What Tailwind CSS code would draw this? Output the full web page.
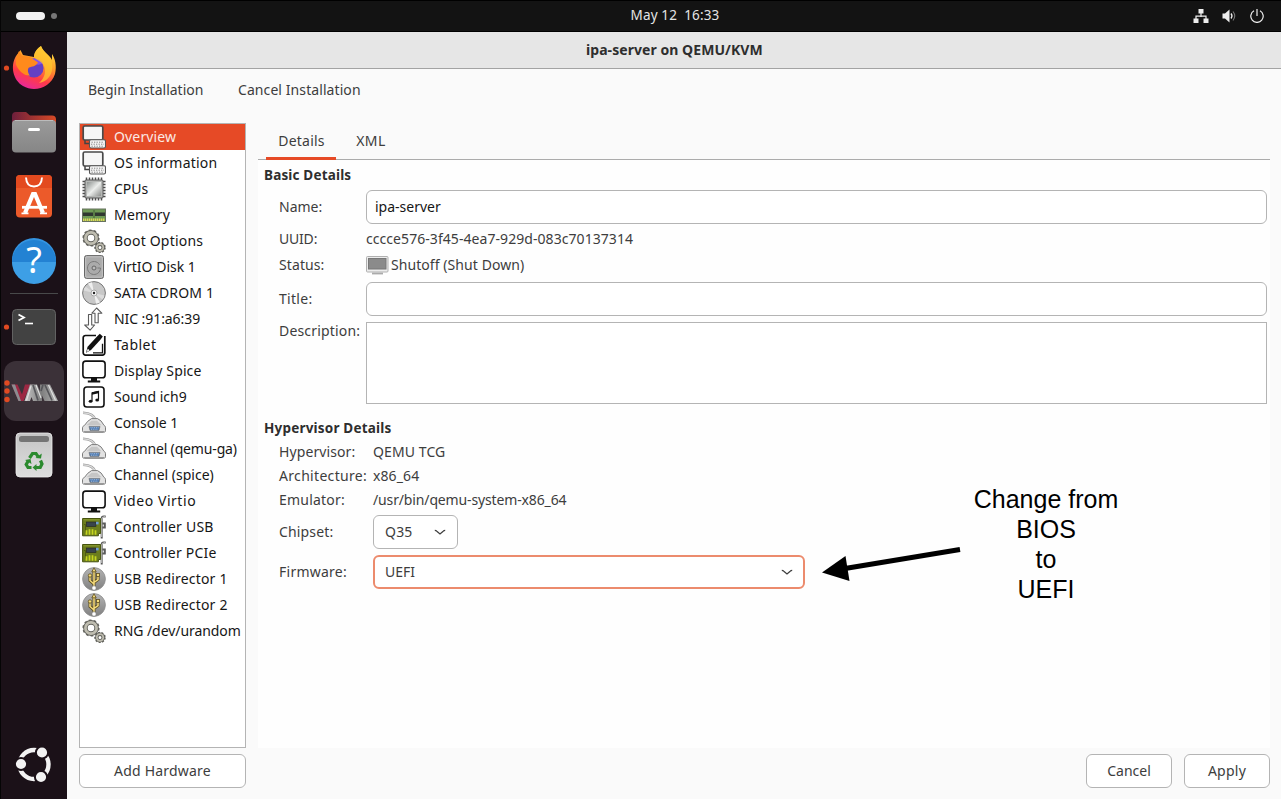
<!DOCTYPE html>
<html lang="en">
<head>
<meta charset="utf-8">
<title>ipa-server on QEMU/KVM</title>
<script src="https://cdn.jsdelivr.net/npm/@tailwindcss/browser@4"></script>
</head>
<body class="w-[1281px] h-[799px] overflow-hidden bg-[#fafafa] font-['Noto_Sans',sans-serif] text-[14px] text-[#3d3d3d]">

<svg class="absolute size-0">
  <defs>
    <linearGradient id="gMetal" x1="0" y1="0" x2="1" y2="1"><stop offset="0" stop-color="#8d9290"/><stop offset=".5" stop-color="#eceeec"/><stop offset="1" stop-color="#8d8f8d"/></linearGradient>
    <linearGradient id="gGray" x1="0" y1="0" x2="0" y2="1"><stop offset="0" stop-color="#b4b4b4"/><stop offset="1" stop-color="#808080"/></linearGradient>
    <symbol id="pc" viewBox="0 0 24 24">
      <path d="M3 15v3.500h4.500" fill="none" stroke="#444" stroke-width="1.500"/>
      <rect x="1.200" y="1" width="19.600" height="14" rx="1.500" fill="#f6f6f6" stroke="#4a4a4a" stroke-width="1.700"/>
      <rect x="7.500" y="14.800" width="16" height="8.200" rx="1.500" fill="#f6f6f6" stroke="#555" stroke-width="1.100"/>
      <path d="M9.500 17.200h12M9 19.200h13M9.500 21.200h12" stroke="#777" stroke-width=".9" stroke-dasharray="1.300 1.200"/>
    </symbol>
    <symbol id="cpu" viewBox="0 0 24 24">
      <path d="M4.500 .5v23M7.500 .5v23M10.500 .5v23M13.500 .5v23M16.500 .5v23M19.500 .5v23M.5 4.500h23M.5 7.500h23M.5 10.500h23M.5 13.500h23M.5 16.500h23M.5 19.500h23" stroke="#4c4c4c" stroke-width="1.500"/>
      <rect x="3" y="3" width="18" height="18" rx="1" fill="#b5b7b5" stroke="#5a5a5a"/>
      <rect x="5" y="5" width="14" height="14" fill="url(#gMetal)"/>
    </symbol>
    <symbol id="mem" viewBox="0 0 24 24">
      <rect x=".5" y="6" width="23" height="12.500" fill="#6f9b55" stroke="#67725f"/>
      <rect x="1" y="9.500" width="10" height="3.500" fill="#303830"/><rect x="13" y="9.500" width="10" height="3.500" fill="#303830"/>
      <path d="M12 7v8" stroke="#39522d" stroke-width=".8"/>
      <path d="M1 16.700h22" stroke="#dcd75a" stroke-width="2.600" stroke-dasharray="1.400 .6"/>
    </symbol>
    <symbol id="gears" viewBox="0 0 24 24">
      <circle cx="9" cy="9" r="7.400" fill="none" stroke="#62625c" stroke-width="2.400" stroke-dasharray="2.500 2.150"/>
      <circle cx="9" cy="9" r="5.600" fill="none" stroke="#62625c" stroke-width="4.600"/>
      <circle cx="9" cy="9" r="5.600" fill="none" stroke="#bfbdb0" stroke-width="2.700"/>
      <circle cx="18" cy="18.500" r="4.900" fill="none" stroke="#62625c" stroke-width="1.700" stroke-dasharray="2 1.420"/>
      <circle cx="18" cy="18.500" r="3.200" fill="#fff" stroke="#62625c" stroke-width="3.400"/>
      <circle cx="18" cy="18.500" r="3.300" fill="none" stroke="#bfbdb0" stroke-width="1.700"/>
    </symbol>
    <symbol id="disk" viewBox="0 0 24 24">
      <rect x="2.500" y=".6" width="19" height="22.800" rx="2" fill="#ababab" stroke="#666"/>
      <rect x="3.700" y="1.800" width="16.600" height="20.400" rx="1" fill="none" stroke="#c9c9c9" stroke-width=".8"/>
      <path d="M17.600 9.700a6.500 6.500 0 1 0 .9 3.300h-3" fill="none" stroke="#7a7a7a"/>
      <circle cx="12" cy="13" r="2" fill="#bbb" stroke="#666"/>
    </symbol>
    <symbol id="cd" viewBox="0 0 24 24">
      <circle cx="12" cy="12" r="11.400" fill="#c8c8c8" stroke="#777"/>
      <path d="M12 12L6 2.500A11 11 0 0 1 10 1.200zM12 12l6 9.500a11 11 0 0 1-4 1.300z" fill="#efefef"/>
      <path d="M12 12L1.500 9.500a11 11 0 0 1 2-4zM12 12l10.500 2.500a11 11 0 0 1-2 4z" fill="#dcdcdc"/>
      <circle cx="12" cy="12" r="3" fill="#f6f6f6" stroke="#999" stroke-width=".8"/><circle cx="12" cy="12" r="1.200" fill="#222"/>
    </symbol>
    <symbol id="nic" viewBox="0 0 24 24" fill="#fff" stroke="#5b5b5b" stroke-width="1.100" stroke-linejoin="round">
      <path d="M6.500 7.500h3.200v10.500h2.900L8.100 23.200 2.700 18h3.800z"/>
      <path d="M13 15.800h3.200V6.200h3.600L14.600 1 9.900 6.200H13z"/>
    </symbol>
    <symbol id="tablet" viewBox="0 0 24 24">
      <path d="M14 2.500H3.500a2.300 2.300 0 0 0-2.300 2.300v15a2.300 2.300 0 0 0 2.300 2.300h17a2.300 2.300 0 0 0 2.300-2.300V3" fill="none" stroke="#111" stroke-width="1.700"/>
      <path d="M4 19.800l1.600-6L15 3.600l2.800-2.800 3 2.600-2.400 3.400L9 17z" fill="#111"/>
      <path d="M4.500 19.300l1.300-3.600 1.800 1.500z" fill="#fff"/>
      <path d="M11 19.800h9.500v-9" fill="none" stroke="#111" stroke-width="1.300"/>
    </symbol>
    <symbol id="display" viewBox="0 0 24 24">
      <rect x=".9" y="2.100" width="22.200" height="16.600" rx="2.800" fill="#fff" stroke="#111" stroke-width="1.600"/>
      <path d="M9 18.800h6v2.600h3.200v2H5.800v-2H9z" fill="#111"/>
    </symbol>
    <symbol id="sound" viewBox="0 0 24 24">
      <rect x="2" y="2" width="20" height="20" rx="2.800" fill="#fff" stroke="#111" stroke-width="1.600"/>
      <path d="M10 16V8l6.500-1.500v8" fill="none" stroke="#111" stroke-width="1.200"/><path d="M10 7.200l6.500-1.500v2.500L10 9.700z" fill="#111"/>
      <ellipse cx="8.600" cy="16.300" rx="1.900" ry="1.500" fill="#111"/><ellipse cx="15.200" cy="14.900" rx="1.900" ry="1.500" fill="#111"/>
    </symbol>
    <symbol id="serial" viewBox="0 0 24 24">
      <path d="M1 1.800c7 .2 11 2.200 12.500 7.200" fill="none" stroke="#9a9a9a" stroke-width="2.600"/><path d="M1 1.800c7 .2 11 2.200 12.500 7.200" fill="none" stroke="#dcdcdc" stroke-width="1.200"/>
      <path d="M9.500 7.600h6q4 1.500 6.500 6.800c1.200.6 1.500 1.300 1.500 2.400v3c0 1-1 1.500-2 1.500H2.500c-1.200 0-2-.6-2-1.500v-3c0-1.200.8-1.800 2-2.400q3-4.800 7-6.800z" fill="#e2e2e2" stroke="#7c7c7c"/>
      <path d="M9.500 9.800h5.500l4.500 4.500H4.500z" fill="#c6c6c6"/><path d="M2 20.500h20" stroke="#999"/>
      <path d="M7 15.400h11l-1 4H8z" fill="#4b78b0" stroke="#777" stroke-width=".7"/><path d="M8.500 16.700h8M9 18.200h7" stroke="#cfe0f4" stroke-width=".7" stroke-dasharray="1 .8"/>
    </symbol>
    <symbol id="card" viewBox="0 0 24 24">
      <path d="M19.700 23.500V3.500q0-2 2-2h2M20 8.500h2.800v4H20" fill="none" stroke="#5a5a5a" stroke-width="2"/><path d="M19.700 22V4q0-2 3.300-2.400" fill="none" stroke="#d4d4d4" stroke-width=".9"/>
      <path d="M.6 3.500h18v15h-2.200v2.300H.6z" fill="#6c7d1d" stroke="#46530f"/>
      <path d="M1.500 4.800h16" stroke="#93a53a" stroke-width=".8"/>
      <rect x="4.500" y="7" width="9.500" height="4.500" fill="#39444c" stroke="#222" stroke-width=".6"/><rect x="14" y="6.800" width="2.600" height="2.600" fill="#6fa0d8"/>
      <path d="M2 9.500h1.500v8" fill="none" stroke="#46530f" stroke-width=".8"/>
      <path d="M4.500 19.800v-4.500M7.500 19.800v-5.500M10.500 19.800v-5.500M13.500 19.800v-4.500" stroke="#c6d61f" stroke-width="1.800"/>
    </symbol>
    <symbol id="usb" viewBox="0 0 24 24">
      <circle cx="12" cy="12" r="11.400" fill="url(#gGray)" stroke="#8d8d8d" stroke-width=".8"/>
      <g fill="none" stroke="#5c4e20" stroke-width="3"><path d="M12 21V3M12 17l-4-3.500V9M12 15.500l4-3V8"/></g>
      <g fill="none" stroke="#f6dc7c" stroke-width="1.500"><path d="M12 21V3M12 17l-4-3.500V9M12 15.500l4-3V8"/></g>
      <path d="M12 .8l2.200 4H9.800z" fill="#f6dc7c" stroke="#5c4e20" stroke-width=".8"/>
      <circle cx="8" cy="8.500" r="1.700" fill="#f6dc7c" stroke="#5c4e20" stroke-width=".8"/><rect x="14.500" y="6.500" width="3" height="3" fill="#f6dc7c" stroke="#5c4e20" stroke-width=".8"/>
      <circle cx="12" cy="21" r="2.200" fill="#fff" stroke="#777" stroke-width=".6"/>
    </symbol>
    <symbol id="chev" viewBox="0 0 12 8"><path d="M.8 2.300q1.200 0 2 .9L6 6l3.200-2.800q.8-.9 2-.9" fill="none" stroke="#3d3d3d" stroke-width="1.200"/></symbol>
  </defs>
</svg>

<div class="flex h-full flex-col border-l border-[#050505]">
  <!-- Top panel -->
  <header class="grid h-8 shrink-0 grid-cols-3 items-center border-y border-black bg-[#131313] text-[#e4e4e4]">
    <div class="flex items-center gap-1.5 pl-[15px]">
      <span class="h-2 w-[29px] rounded-full bg-[#f2f2f2]"></span><span class="size-1.5 rounded-full bg-[#777]"></span>
    </div>
    <div class="whitespace-pre pb-0.5 pl-[68px] text-center text-[13.500px] tracking-[.12px]">May 12  16:33</div>
    <div class="flex items-center justify-end gap-[13px] pb-px pr-[17px]">
      <svg class="h-[14px] w-4" viewBox="0 0 16 14"><path d="M8 4v4M3 10V7.200h10V10" fill="none" stroke="#eee" stroke-width="1.200"/><path d="M5.500 0h5v4.500h-5zM.5 9.500h5V14h-5zM10.500 9.500h5V14h-5z" fill="#eee"/></svg>
      <svg class="h-[14px] w-[15px]" viewBox="0 0 15 14"><path d="M.5 4.500h2.500L7.500.5v13L3 9.500H.5z" fill="#eee"/><path d="M9 4.500q2 2.500 0 5" fill="none" stroke="#eee" stroke-width="1.300"/><path d="M11 2.500q3.500 4.500 0 9" fill="none" stroke="#777" stroke-width="1.100"/></svg>
      <svg class="size-[14px]" viewBox="0 0 14 14"><path d="M4 1.800a6.200 6.200 0 1 0 6 0M7 0v7" fill="none" stroke="#eee" stroke-width="1.200"/></svg>
    </div>
  </header>

  <div class="flex min-h-0 flex-1">
    <!-- Dock -->
    <nav class="flex w-[66px] shrink-0 flex-col items-center bg-[#1b1118]">
      <svg class="h-full w-full" viewBox="0 0 66 767">
        <defs>
          <linearGradient id="ff" x1=".8" y1="0" x2=".35" y2="1"><stop offset="0" stop-color="#ffe745"/><stop offset=".4" stop-color="#ff9a28"/><stop offset=".72" stop-color="#ff3b47"/><stop offset="1" stop-color="#e8289a"/></linearGradient>
          <linearGradient id="fold" x1="0" y1="0" x2="1" y2="0"><stop offset="0" stop-color="#6d1f3c"/><stop offset="1" stop-color="#d84a26"/></linearGradient>
          <linearGradient id="fgr" x1="0" y1="0" x2="0" y2="1"><stop offset="0" stop-color="#9a9a9a"/><stop offset="1" stop-color="#868686"/></linearGradient>
          <linearGradient id="trash" x1="0" y1="0" x2="0" y2="1"><stop offset="0" stop-color="#c4c4c4"/><stop offset="1" stop-color="#dedede"/></linearGradient>
          <linearGradient id="vm" x1="0" y1="0" x2="1" y2="0"><stop offset="0" stop-color="#c9c9c9"/><stop offset=".5" stop-color="#7d7d7d"/><stop offset="1" stop-color="#b5b5b5"/></linearGradient>
        </defs>
        <!-- Firefox -->
        <path d="M15 24C9 34 12 48 22 54c12 7 28 1 32-12 2-8 0-16-3-20v6c-2-5-8-7-11-14-6 4-7 8-7 11l-11-2-2.500-5z" fill="url(#ff)"/>
        <circle cx="33" cy="36" r="9.600" fill="#6440c4"/><path d="M25 31q4-5 9-4.500 5 .500 8 4.500-4 3-8 1-5 3-9-1z" fill="#8653e8"/>
        <path d="M40 14c2 7 10 9 11 17 2 11-5 19-13 20 6-5 8-13 4-19-4-4-9-5-9-8 1-5 4-8 7-10z" fill="#ffc52f" opacity=".75"/>
        <path d="M15 27l3-8 3 5 7 .500 9 6c-2 4-6 4-9 5-2 2-1 6 1 8-5 1-12-5-14-11z" fill="#ff8a1c"/>
        <circle cx="5.500" cy="36" r="2.600" fill="#e04a22"/>
        <!-- Files -->
        <path d="M11 84q0-4 4-4h10l4 3.500h22q4 0 4 4V112H11z" fill="url(#fold)"/>
        <rect x="11" y="88" width="44" height="32.500" rx="4" fill="url(#fgr)"/><path d="M14 88.500h38" stroke="#bbb"/><rect x="27" y="96" width="12" height="3" rx="1.500" fill="#fff"/>
        <!-- App Center -->
        <rect x="15" y="143" width="36" height="42.500" rx="4" fill="#ec5a2a"/><path d="M15 147q0-4 4-4h28q4 0 4 4v9H15z" fill="#e34a1f"/>
        <path d="M25 145.500q.500 9 8 9t8-9" fill="none" stroke="#fff" stroke-width="1.900"/>
        <path d="M24 181l8-19h2l8 19" fill="none" stroke="#fff" stroke-width="4.200"/><path d="M21 175.300h25" stroke="#fff" stroke-width="2.800"/><path d="M20.500 181.300h7M39 181.300h7" stroke="#fff" stroke-width="1.800"/>
        <!-- Help -->
        <circle cx="33" cy="228" r="22" fill="#3494e0"/><path d="M11 230a22 22 0 0 0 44 0z" fill="#3d9fe6"/><path d="M11 230a22 22 0 0 1 44 0z" fill="#2382d3"/>
        <text x="33" y="240.500" text-anchor="middle" font-size="36" fill="#fff" class="font-['Noto_Sans',sans-serif]">?</text>
        <path d="M9 261.500h48" stroke="#48494a"/>
        <!-- Terminal -->
        <rect x="11.500" y="277.500" width="43" height="35" rx="4" fill="#424242" stroke="#626262"/>
        <path d="M17.500 282.500l5.500 3-5.500 3" fill="none" stroke="#fff" stroke-width="1.800"/><path d="M24 291.500h8" stroke="#fff" stroke-width="1.600"/>
        <circle cx="5.500" cy="295" r="2.600" fill="#e04a22"/>
        <!-- Virtual Machine Manager -->
        <rect x="3" y="329" width="60" height="60" rx="12" fill="#3b3138"/>
        <path d="M10.500 352.500h6l4.500 10 3-10h5.500L22.500 369h-5z" fill="#9c2843"/><path d="M10.500 352.500h3.500l6 16.500h-2.500z" fill="#8b8d91"/>
        <path d="M23.500 369L29 352.500h7l3 7v-7h10L57 369H43.500L41 363.500V369h-9l-1.500-4-1.500 4z" fill="url(#vm)"/>
        <path d="M32 353l5 15.500M42 353l-2 6M44 353l7 15.500" stroke="#56565a" stroke-width="1.700"/><path d="M35 353l5 13M47.500 353l7 15.500M30 354l-4.500 14.500" stroke="#e2e2e2" stroke-width="1.100"/>
        <circle cx="6" cy="351" r="2.700" fill="#e04a22"/><circle cx="6" cy="359" r="2.700" fill="#e04a22"/><circle cx="6" cy="367.500" r="2.700" fill="#e04a22"/>
        <!-- Trash -->
        <rect x="15" y="401" width="36" height="44" rx="4" fill="url(#trash)" stroke="#eee" stroke-width=".8"/><rect x="18" y="404" width="30" height="6" rx="2.500" fill="#757575"/>
        <g fill="none" stroke="#2b8a2e" stroke-width="3.200"><path d="M28.500 426l3-4.500h3.500l2 3.200"/><path d="M39.500 428.500l1.500 3.500-1.800 3.500h-4.200"/><path d="M30.500 435.500h-3.500l-1.800-3 2-3.500"/></g>
        <path d="M34.500 426l5.500.5.800-5zM35.500 432v7l-4-3.500zM24 428l5.500-1 1 5z" fill="#2b8a2e"/>
        <!-- Show applications -->
        <circle cx="33" cy="732.500" r="14.500" fill="none" stroke="#f2f2f2" stroke-width="4.400"/>
        <g fill="#f2f2f2" stroke="#1b1118" stroke-width="2"><circle cx="20" cy="732" r="6.100"/><circle cx="41" cy="720.500" r="6.100"/><circle cx="40" cy="745" r="6.100"/></g>
      </svg>
    </nav>

    <!-- Virtual machine window -->
    <main class="flex min-w-0 flex-1 flex-col bg-[#fafafa]">
      <div class="flex h-[37px] shrink-0 items-center border-b border-[#a3a3a3] bg-[#e6e6e6] pb-0.5 pl-[519px] text-[14px] font-bold tracking-[.06px] text-[#2e2e2e]">ipa-server on QEMU/KVM</div>
      <div class="flex h-[42px] shrink-0 items-center pb-0.5 pl-[21px]"><span class="w-[150px]">Begin Installation</span><span class="tracking-[.08px]">Cancel Installation</span></div>

      <div class="mt-3 flex gap-3 pl-3">
        <aside class="flex w-[167px] shrink-0 flex-col gap-1.5">
          <ul class="h-[625px] border border-[#b4b4b4] bg-white text-[#161616] [&>li]:flex [&>li]:h-[26px] [&>li]:items-center [&>li]:gap-2 [&>li]:whitespace-nowrap [&>li]:pl-0.5 [&_span]:pb-0.5 [&_svg]:size-6 [&_svg]:shrink-0">
            <li class="bg-[#e64a26] text-[#fbe9e4]"><svg><use href="#pc"/></svg><span class="tracking-[.15px]">Overview</span></li>
            <li><svg><use href="#pc"/></svg><span class="tracking-[.22px]">OS information</span></li>
            <li><svg><use href="#cpu"/></svg><span>CPUs</span></li>
            <li><svg><use href="#mem"/></svg><span class="tracking-[.18px]">Memory</span></li>
            <li><svg><use href="#gears"/></svg><span class="tracking-[.2px]">Boot Options</span></li>
            <li><svg><use href="#disk"/></svg><span>VirtIO Disk 1</span></li>
            <li><svg><use href="#cd"/></svg><span class="tracking-[.18px]">SATA CDROM 1</span></li>
            <li><svg><use href="#nic"/></svg><span class="tracking-[-.07px]">NIC :91:a6:39</span></li>
            <li><svg><use href="#tablet"/></svg><span class="tracking-[.45px]">Tablet</span></li>
            <li><svg><use href="#display"/></svg><span class="tracking-[.12px]">Display Spice</span></li>
            <li><svg><use href="#sound"/></svg><span>Sound ich9</span></li>
            <li><svg><use href="#serial"/></svg><span>Console 1</span></li>
            <li><svg><use href="#serial"/></svg><span class="tracking-[-.15px]">Channel (qemu-ga)</span></li>
            <li><svg><use href="#serial"/></svg><span>Channel (spice)</span></li>
            <li><svg><use href="#display"/></svg><span class="tracking-[.55px]">Video Virtio</span></li>
            <li><svg><use href="#card"/></svg><span class="tracking-[.22px]">Controller USB</span></li>
            <li><svg><use href="#card"/></svg><span class="tracking-[.2px]">Controller PCIe</span></li>
            <li><svg><use href="#usb"/></svg><span class="tracking-[.19px]">USB Redirector 1</span></li>
            <li><svg><use href="#usb"/></svg><span class="tracking-[.19px]">USB Redirector 2</span></li>
            <li><svg><use href="#gears"/></svg><span class="tracking-[-.06px]">RNG /dev/urandom</span></li>
          </ul>
          <button class="h-[34px] rounded-md border border-[#b4b4b4] bg-white pb-0.5 tracking-[.2px]">Add Hardware</button>
        </aside>

        <section class="flex w-[1012px] flex-col gap-1.5">
          <div class="flex h-[625px] flex-col">
            <div class="flex h-[37px] shrink-0 border-b border-[#ababab] pl-2">
              <div class="flex h-[37px] w-[70px] items-center justify-center border-b-[3px] border-[#e64a26] pl-px tracking-[.2px]">Details</div>
              <div class="flex h-[34px] w-[70px] items-center justify-center tracking-[.4px]">XML</div>
            </div>
            <div class="relative flex-1 bg-[#fefefe] pl-1.5 pr-[3px] [&_span]:pb-0.5">
              <h2 class="flex h-[30px] items-center text-[13.500px] font-bold tracking-[.17px] text-[#2e2e2e]">Basic Details</h2>
              <div class="flex h-[34px] items-center pl-[15px]"><span class="w-[87px] shrink-0">Name:</span><div class="flex h-full flex-1 items-center rounded-md border border-[#b4b4b4] bg-white pb-0.5 pl-2 text-[#161616]">ipa-server</div></div>
              <div class="mt-0.5 flex h-[26px] items-center pl-[15px]"><span class="w-[87px] shrink-0 tracking-[-.2px]">UUID:</span><span class="tracking-[.06px]">cccce576-3f45-4ea7-929d-083c70137314</span></div>
              <div class="flex h-[26px] items-center pl-[15px]"><span class="w-[87px] shrink-0 tracking-[.1px]">Status:</span>
                <svg class="mr-0.5 h-5 w-[23px]" viewBox="0 -1 23 20"><rect x=".5" y=".5" width="21.500" height="15.500" rx="1" fill="#ececec" stroke="#b0b0b0"/><rect x="2.500" y="2.500" width="17.500" height="10.500" fill="#8b8b8b" stroke="#777"/><path d="M6 17.500h11" stroke="#aaa" stroke-width="1.800"/></svg>
                <span class="tracking-[.07px]">Shutoff (Shut Down)</span></div>
              <div class="mt-1 flex h-[34px] items-center pl-[15px]"><span class="w-[87px] shrink-0 tracking-[.3px]">Title:</span><div class="h-full flex-1 rounded-md border border-[#b4b4b4] bg-white"></div></div>
              <div class="mt-1.5 flex h-[82px] pl-[15px]"><span class="w-[87px] shrink-0 leading-[18px] tracking-[.18px]">Description:</span><div class="h-full flex-1 border border-[#b4b4b4] bg-white"></div></div>
              <h2 class="mt-3 flex h-6 items-center text-[13.500px] font-bold tracking-[.2px] text-[#2e2e2e]">Hypervisor Details</h2>
              <div class="flex h-6 items-center pl-[15px]"><span class="w-[94px] shrink-0 tracking-[.1px]">Hypervisor:</span><span class="tracking-[.1px]">QEMU TCG</span></div>
              <div class="flex h-6 items-center pl-[15px]"><span class="w-[94px] shrink-0 tracking-[.32px]">Architecture:</span><span class="tracking-[.1px]">x86_64</span></div>
              <div class="flex h-6 items-center pl-[15px]"><span class="w-[94px] shrink-0 tracking-[.2px]">Emulator:</span><span class="tracking-[-.14px]">/usr/bin/qemu-system-x86_64</span></div>
              <div class="mt-[3px] flex h-[34px] items-center pl-[15px]"><span class="w-[94px] shrink-0 tracking-[.15px]">Chipset:</span><div class="flex h-full w-[85px] items-center justify-between rounded-md border border-[#b4b4b4] bg-white pl-[11px] pr-[11px]"><span class="tracking-[.2px]">Q35</span><svg class="h-2 w-3"><use href="#chev"/></svg></div></div>
              <div class="mt-1.5 flex h-[34px] items-center pl-[15px]"><span class="w-[94px] shrink-0 tracking-[.25px]">Firmware:</span><div class="flex h-full w-[432px] items-center justify-between rounded-md border-2 border-[#ec8b6d] bg-white px-2.5"><span>UEFI</span><svg class="h-2 w-3"><use href="#chev"/></svg></div></div>

              <!-- Annotation laid over the page -->
              <svg class="absolute left-[560px] top-[380px] h-[50px] w-[150px]" viewBox="818 540 150 50"><path d="M960 549.500L845 568.500" stroke="#000" stroke-width="5"/><path d="M822 572.500l23.500-16.500 4 25z"/></svg>
              <p class="absolute left-[688px] top-[324px] w-[200px] text-center font-['Liberation_Sans',sans-serif] text-[25px] leading-[30px] text-black">Change from<br>BIOS<br>to<br>UEFI</p>
            </div>
          </div>
          <div class="flex justify-end gap-3">
            <button class="h-[34px] w-[86px] rounded-md border border-[#b4b4b4] bg-white pb-0.5">Cancel</button>
            <button class="h-[34px] w-[86px] rounded-md border border-[#b4b4b4] bg-white pb-0.5 tracking-[.25px]">Apply</button>
          </div>
        </section>
      </div>
    </main>
  </div>
</div>
</body>
</html>
